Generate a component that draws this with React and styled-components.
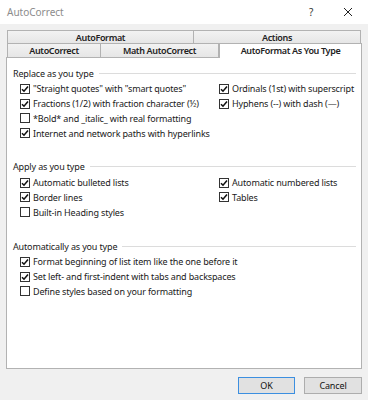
import React from "react"
import styled, { createGlobalStyle } from "styled-components"

const GlobalStyle = createGlobalStyle`
  body {
    margin: 0;
    background: #f0f0f0;
  }
`

const Dialog = styled.div`
  width: 368px;
  height: 400px;
  display: flex;
  flex-direction: column;
  background: #f0f0f0;
  font-family: "Noto Sans", "Open Sans", sans-serif;
  font-size: 9px;
  letter-spacing: -0.15px;
  color: #1a1a1a;
  box-sizing: border-box;
  overflow: hidden;
`

const TitleBar = styled.div`
  height: 24px;
  background: #fff;
  display: flex;
  align-items: center;
  padding-left: 7px;
  box-sizing: border-box;
`

const Title = styled.div`
  flex: 1;
  color: #8c8c8c;
  font-size: 10px;
  letter-spacing: 0;
`

const TitleButton = styled.div`
  width: 20px;
  display: flex;
  justify-content: center;
  align-items: center;
  color: #333;
  font-size: 10px;
  margin-right: ${p => p.$mr || 0}px;
`

const Tabs = styled.div`
  margin-top: 6px;
  padding-left: 7px;
`

const TabRow = styled.div`
  display: flex;
  height: ${p => p.$h}px;
`

const Tab = styled.div`
  width: ${p => p.$w}px;
  box-sizing: border-box;
  border: 1px solid #b2b2b2;
  border-bottom: ${p => (p.$top ? "1px solid #b2b2b2" : "none")};
  border-top: ${p => (p.$top ? "1px solid #b2b2b2" : "none")};
  margin-left: -1px;
  &:first-child {
    margin-left: 0;
  }
  background: linear-gradient(#f2f2f2, #e6e6e6);
  display: flex;
  justify-content: center;
  align-items: center;
  font-weight: 600;
  letter-spacing: -0.35px;
  color: #222;
  line-height: 1;
`

const ActiveTab = styled.div`
  width: ${p => p.$w}px;
  box-sizing: border-box;
  margin-top: -1px;
  height: calc(100% + 2px);
  border: 1px solid #b2b2b2;
  border-bottom: none;
  background: #fff;
  position: relative;
  z-index: 1;
  display: flex;
  justify-content: center;
  padding-top: 2px;
  font-weight: 600;
  letter-spacing: -0.35px;
  color: #222;
  line-height: 1;
`

const Panel = styled.div`
  flex: 1;
  margin-left: 6px;
  width: 356px;
  box-sizing: border-box;
  background: #fff;
  border: 1px solid #b2b2b2;
  padding: 8px 5px 0 6px;
`

const Section = styled.div`
  margin-bottom: 19.5px;
`

const Heading = styled.div`
  height: 14px;
  display: flex;
  align-items: center;
  gap: 5px;
  &::after {
    content: "";
    flex: 1;
    height: 1px;
    background: #dcdcdc;
  }
`

const Grid = styled.div`
  margin-top: 1.6px;
  margin-left: 7px;
  display: grid;
  grid-template-columns: 199px 1fr;
  grid-auto-rows: 14.7px;
`

const Option = styled.label`
  display: flex;
  align-items: center;
  gap: 3px;
  white-space: nowrap;
  grid-column: ${p => p.$col || "auto"};
`

const Box = styled.span`
  width: 10px;
  height: 10px;
  box-sizing: border-box;
  border: 1px solid #333;
  background: #fff;
  display: flex;
  align-items: center;
  justify-content: center;
  flex-shrink: 0;
`

const Footer = styled.div`
  display: flex;
  justify-content: flex-end;
  gap: 9px;
  padding: 8px 6px 6px 0;
`

const Button = styled.div`
  width: ${p => p.$w}px;
  height: 17px;
  box-sizing: border-box;
  background: #e1e1e1;
  border: 1px solid ${p => (p.$primary ? "#3c8fe0" : "#adadad")};
  display: flex;
  align-items: center;
  justify-content: center;
  color: #111;
`

const Check = ({ on }) => (
  <Box>
    {on && (
      <svg width="8" height="8" viewBox="0 0 8 8">
        <polyline
          points="1,4.2 3,6.2 7,1.6"
          fill="none"
          stroke="#111"
          strokeWidth="1.6"
        />
      </svg>
    )}
  </Box>
)

const Item = ({ on, col, children }) => (
  <Option $col={col}>
    <Check on={on} />
    <span>{children}</span>
  </Option>
)

export default function App() {
  return (
    <Dialog>
      <GlobalStyle />
      <TitleBar>
        <Title>AutoCorrect</Title>
        <TitleButton $mr={17}>?</TitleButton>
        <TitleButton $mr={10}>
          <svg width="10" height="10" viewBox="0 0 10 10">
            <path d="M1 1 L9 9 M9 1 L1 9" stroke="#222" strokeWidth="1" />
          </svg>
        </TitleButton>
      </TitleBar>

      <Tabs>
        <TabRow $h={14}>
          <Tab $top $w={187}>AutoFormat</Tab>
          <Tab $top $w={168}>Actions</Tab>
        </TabRow>
        <TabRow $h={13}>
          <Tab $w={94}>AutoCorrect</Tab>
          <Tab $w={119}>Math AutoCorrect</Tab>
          <ActiveTab $w={143}>AutoFormat As You Type</ActiveTab>
        </TabRow>
      </Tabs>

      <Panel>
        <Section>
          <Heading>Replace as you type</Heading>
          <Grid>
            <Item on>"Straight quotes" with "smart quotes"</Item>
            <Item on>Ordinals (1st) with superscript</Item>
            <Item on>Fractions (1/2) with fraction character (½)</Item>
            <Item on>Hyphens (--) with dash (—)</Item>
            <Item col="1">*Bold* and _italic_ with real formatting</Item>
            <Item on col="1">Internet and network paths with hyperlinks</Item>
          </Grid>
        </Section>
        <Section>
          <Heading>Apply as you type</Heading>
          <Grid>
            <Item on>Automatic bulleted lists</Item>
            <Item on>Automatic numbered lists</Item>
            <Item on>Border lines</Item>
            <Item on>Tables</Item>
            <Item col="1">Built-in Heading styles</Item>
          </Grid>
        </Section>
        <Section>
          <Heading>Automatically as you type</Heading>
          <Grid>
            <Item on col="1 / 3">Format beginning of list item like the one before it</Item>
            <Item on col="1 / 3">Set left- and first-indent with tabs and backspaces</Item>
            <Item col="1 / 3">Define styles based on your formatting</Item>
          </Grid>
        </Section>
      </Panel>

      <Footer>
        <Button $primary $w={57}>OK</Button>
        <Button $w={58}>Cancel</Button>
      </Footer>
    </Dialog>
  )
}
